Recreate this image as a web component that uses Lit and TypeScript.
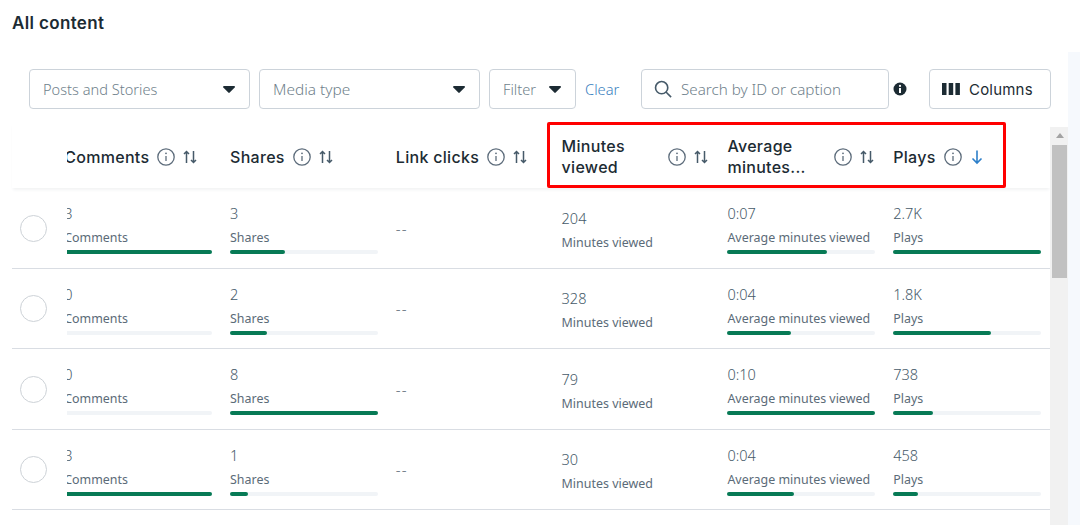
import { LitElement, html, css } from "lit";
import { customElement } from "lit/decorators.js";

const caret = html`<svg class="caret" width="12" height="7" viewBox="0 0 12 7"><path d="M1 0h10c.8 0 1.200.9.7 1.500L6.700 6.600c-.4.400-1 .4-1.400 0L.3 1.500C-.2.900.2 0 1 0z" fill="#1c2b33"/></svg>`;
const info = html`<svg class="info" width="18" height="18" viewBox="0 0 18 18" fill="none"><circle cx="9" cy="9" r="8.200" stroke="#5d6c7b" stroke-width="1.300"/><path d="M9 8v5" stroke="#5d6c7b" stroke-width="1.300"/><circle cx="9" cy="5.300" r=".9" fill="#5d6c7b"/></svg>`;
const sortIcon = html`<svg class="sort" width="14" height="14" viewBox="0 0 14 14" fill="none" stroke="#465a69" stroke-width="1.500"><path d="M3.500 13V1.500M1 4l2.500-2.500L6 4M10.500 1v11.500M8 10l2.500 2.500L13 10"/></svg>`;
const downIcon = html`<svg class="sort" width="14" height="16" viewBox="0 0 14 16" fill="none" stroke="#2d7fc9" stroke-width="1.600"><path d="M7 1.500V14M2.500 9.500L7 14l4.500-4.500"/></svg>`;

const rows: any[][] = [
  [{ v: "3", l: "Comments", p: 100 }, { v: "3", l: "Shares", p: 37 }, { dash: true }, { v: "204", l: "Minutes viewed" }, { v: "0:07", l: "Average minutes viewed", p: 67 }, { v: "2.7K", l: "Plays", p: 100 }],
  [{ v: "0", l: "Comments", p: 0 }, { v: "2", l: "Shares", p: 25 }, { dash: true }, { v: "328", l: "Minutes viewed" }, { v: "0:04", l: "Average minutes viewed", p: 43 }, { v: "1.8K", l: "Plays", p: 66 }],
  [{ v: "0", l: "Comments", p: 0 }, { v: "8", l: "Shares", p: 100 }, { dash: true }, { v: "79", l: "Minutes viewed" }, { v: "0:10", l: "Average minutes viewed", p: 100 }, { v: "738", l: "Plays", p: 27 }],
  [{ v: "3", l: "Comments", p: 100 }, { v: "1", l: "Shares", p: 12 }, { dash: true }, { v: "30", l: "Minutes viewed" }, { v: "0:04", l: "Average minutes viewed", p: 45 }, { v: "458", l: "Plays", p: 17 }],
];
const heads = ["Comments", "Shares", "Link clicks", "Minutes viewed", "Average minutes...", "Plays"];

@customElement("app-root")
export class AppRoot extends LitElement {
  static styles = css`
    :host { display: block; width: 1080px; height: 525px; overflow: hidden; background: #fff; font-family: "Noto Sans", "Open Sans", sans-serif; color: #1c2b33; position: relative; }
    .title { font-family: Inter, sans-serif; font-size: 17px; letter-spacing: .35px; font-weight: 600; line-height: 20px; padding: 13px 0 0 12px; height: 56px; box-sizing: border-box; }
    .filters { display: flex; align-items: center; height: 40px; margin: 13px 0 0 29px; }
    .box { box-sizing: border-box; height: 40px; border: 1px solid #ccd3da; border-radius: 4px; display: flex; align-items: center; font-size: 14.600px; font-weight: 300; color: #6f7f8b; background: #fff; }
    .sel { width: 221px; padding: 0 14px 0 13px; justify-content: space-between; margin-right: 9px; }
    .sel.small { width: 87px; margin-right: 9px; }
    .media { font-size: 15.400px; }
    .clear { color: #3b7fc0; font-size: 14.700px; font-weight: 300; width: 56px; }
    .search { width: 248px; padding: 0 12px; gap: 9px; font-size: 15.200px; }
    .dot { width: 14px; height: 14px; display: block; margin-left: 4px; margin-right: 22px; }
    .columns { width: 122px; padding-left: 12px; gap: 9px; color: #1c2b33; font-family: Inter, sans-serif; font-weight: 400; font-size: 15px; letter-spacing: .2px; }
    .body { display: flex; margin: 13px 0 0 12px; height: 403px; }
    .table { width: 1038px; flex: none; }
    .head { display: flex; height: 66px; box-shadow: 0 3px 3px -1px #f2f3f4; position: relative; }
    .row { display: flex; height: 80.500px; box-sizing: border-box; border-bottom: 1px solid #d9dde3; }
    .checkcol { width: 55px; flex: none; display: flex; align-items: center; padding-left: 8px; box-sizing: border-box; }
    .circle { width: 27px; height: 27px; border-radius: 50%; border: 1px solid #cdd2d7; box-sizing: border-box; margin-top: 1px; }
    .clip { overflow: hidden; flex: 1; }
    .grid { display: grid; grid-template-columns: repeat(6, 165.800px); margin-left: -2.800px; height: 100%; }
    .hc { display: flex; align-items: center; padding-right: 19.400px; font-family: Inter, sans-serif; font-size: 16px; letter-spacing: .3px; font-weight: 500; line-height: 21px; color: #1c2b33; margin-top: 4px; }
    .hl { flex: 0 1 auto; margin-right: 8px; }
    .hc svg { flex: none; }
    .hc .sort { margin-left: 8px; }
    .cell { padding: 15px 17.800px 0 0; display: flex; flex-direction: column; font-weight: 300; color: #465a69; }
    .v { font-size: 14.500px; line-height: 20px; }
    .l { font-size: 12.450px; line-height: 18px; margin-top: 6px; white-space: nowrap; font-weight: 400; color: #5b6b78; }
    .bar { height: 4px; border-radius: 2px; background: #f1f4f7; margin-top: 3px; }
    .fill { height: 100%; border-radius: 2px; background: #077a55; }
    .cell.nb { padding-top: 19.500px; }
    .cell.nb .l { margin-top: 6px; }
    .dash { align-self: center; font-size: 15px; font-weight: 300; color: #5b6b78; letter-spacing: 1px; }
    .sb { width: 18px; flex: none; background: #f1f1f1; height: 398px; margin-top: 5px; display: flex; flex-direction: column; padding: 0 1px 0 2px; box-sizing: border-box; }
    .sb .up { height: 18px; display: flex; justify-content: center; padding-top: 6px; box-sizing: border-box; }
    .sb .thumb { height: 133px; background: #c1c1c1; }
    .strip { flex: 1; background: #f6f9fd; margin-top: -70px; height: 473px; }
    .red { position: absolute; left: 547px; top: 122px; width: 459px; height: 66px; border: 3px solid #f00; border-radius: 2px; box-sizing: border-box; pointer-events: none; }
  `;

  cell(c: any) {
    if (c.dash) return html`<div class="dash">--</div>`;
    if (c.p === undefined)
      return html`<div class="cell nb"><div class="v">${c.v}</div><div class="l">${c.l}</div></div>`;
    return html`<div class="cell"><div class="v">${c.v}</div><div class="l">${c.l}</div>
      <div class="bar"><div class="fill" style="width:${c.p}%"></div></div></div>`;
  }

  render() {
    return html`
      <div class="title">All content</div>
      <div class="filters">
        <div class="box sel"><span>Posts and Stories</span>${caret}</div>
        <div class="box sel media"><span>Media type</span>${caret}</div>
        <div class="box sel small"><span>Filter</span>${caret}</div>
        <div class="clear">Clear</div>
        <div class="box search">
          <svg width="18" height="18" viewBox="0 0 20 20" fill="none" stroke="#465a69" stroke-width="1.800"><circle cx="8.500" cy="8.500" r="6.800"/><path d="M13.300 13.300L19 19"/></svg>
          <span>Search by ID or caption</span>
        </div>
        <svg class="dot" viewBox="0 0 14 14"><circle cx="7" cy="7" r="6.500" fill="#1c2b33"/><rect x="6" y="6" width="2" height="5" fill="#fff"/><circle cx="7" cy="3.900" r="1.100" fill="#fff"/></svg>
        <div class="box columns">
          <svg width="18" height="14" viewBox="0 0 18 14" fill="#1c2b33"><rect x="0" y="1" width="4.500" height="12"/><rect x="6.700" y="1" width="4.500" height="12"/><rect x="13.400" y="1" width="4.500" height="12"/></svg>
          <span>Columns</span>
        </div>
      </div>
      <div class="body">
        <div class="table">
          <div class="head">
            <div class="checkcol"></div>
            <div class="clip"><div class="grid">
              ${heads.map((h, i) => html`<div class="hc"><span class="hl">${h}</span>${info}${i === 5 ? downIcon : sortIcon}</div>`)}
            </div></div>
          </div>
          ${rows.map((r) => html`<div class="row">
            <div class="checkcol"><div class="circle"></div></div>
            <div class="clip"><div class="grid">${r.map((c) => this.cell(c))}</div></div>
          </div>`)}
        </div>
        <div class="sb">
          <div class="up"><svg width="8" height="5" viewBox="0 0 8 5"><path d="M4 0l4 5H0z" fill="#a3a3a3"/></svg></div>
          <div class="thumb"></div>
        </div>
        <div class="strip"></div>
      </div>
      <div class="red"></div>
    `;
  }
}
